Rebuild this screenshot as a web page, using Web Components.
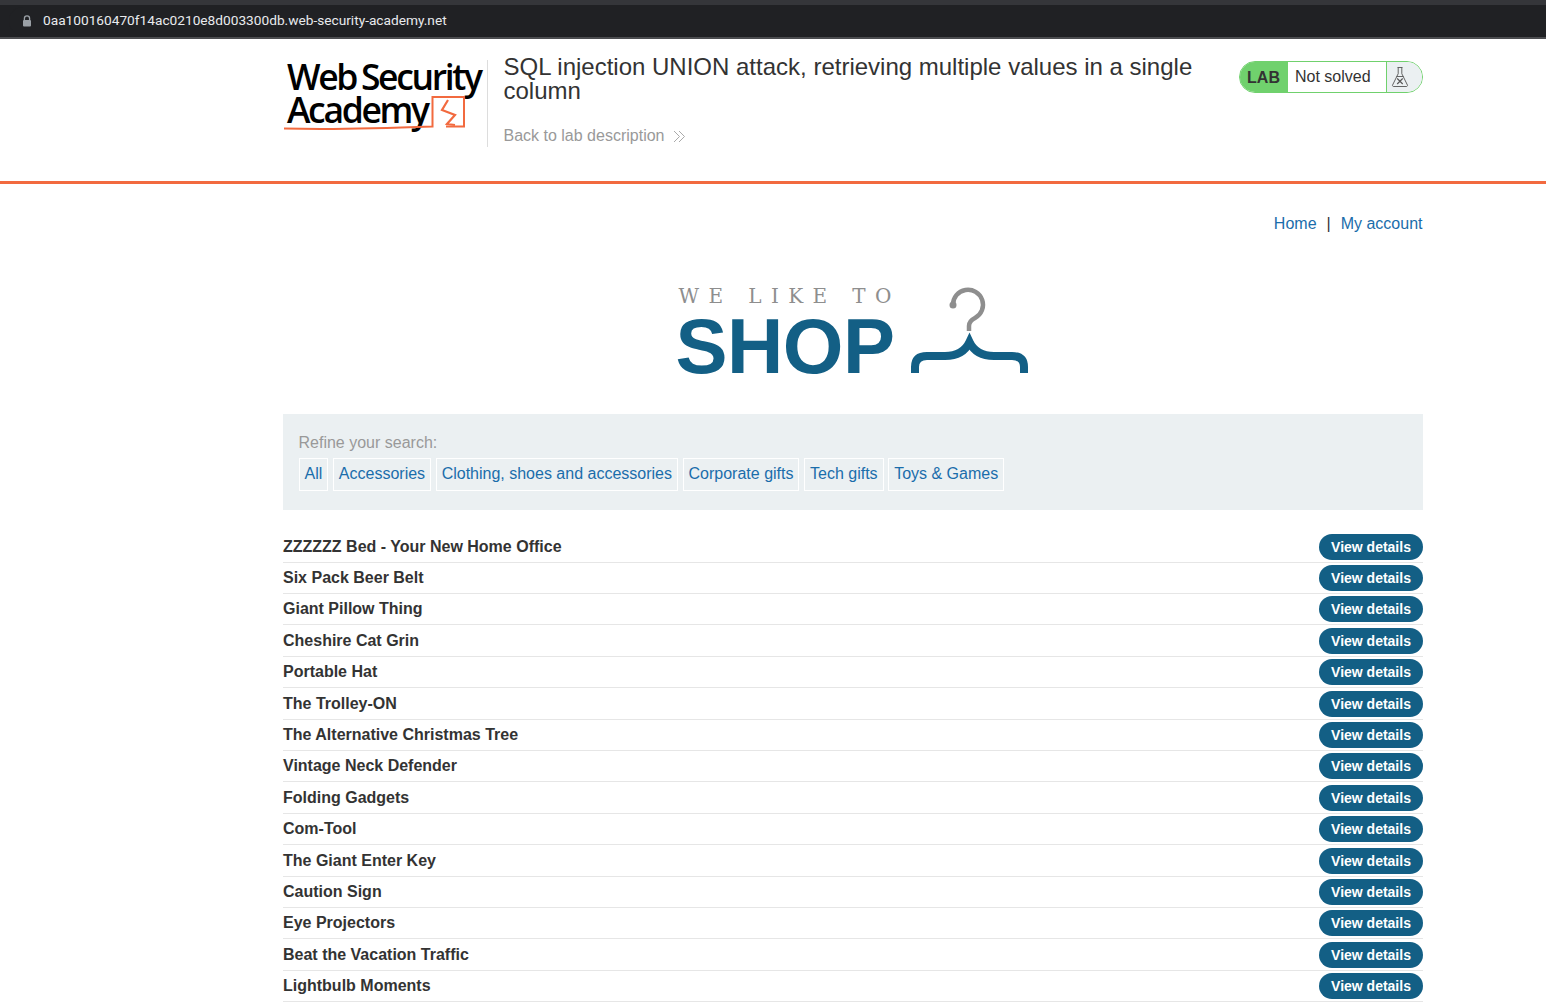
<!DOCTYPE html>
<html lang="en"><head><meta charset="utf-8"><title>Shop</title>
<style>
html,body{margin:0;padding:0;background:#fff;font-family:"Liberation Sans",Arial,sans-serif;color:#333}
body{height:1003px;overflow:hidden}
</style></head><body>
<browser-bar url="0aa100160470f14ac0210e8d003300db.web-security-academy.net"></browser-bar>
<lab-header></lab-header>
<shop-page>
  <top-nav></top-nav>
  <shop-logo></shop-logo>
  <filter-panel></filter-panel>
  <product-list></product-list>
</shop-page>
<script>
function def(name, html){
  customElements.define(name, class extends HTMLElement{
    connectedCallback(){
      if(this.shadowRoot) return;
      const r=this.attachShadow({mode:'open'});
      r.innerHTML=typeof html==='function'?html(this):html;
    }
  });
}
def('browser-bar',el=>`<style>
:host{display:block;height:39px;box-sizing:border-box;background:#35363a;padding-top:5px;border-bottom:2px solid #4c4d50}
.strip{height:32px;background:#202124;display:flex;align-items:center}
.pill{flex:1;height:28px;margin-left:9px;margin-top:-1px;background:#202124;border-radius:14px 0 0 14px;display:flex;align-items:center;padding-left:13px;gap:11px;color:#e8eaed;font:13.7px/1 "Roboto","Liberation Sans",sans-serif}
svg{display:block;flex:none}
</style><div class="strip"><div class="pill"><svg width="10" height="12" viewBox="0 0 10 12"><path d="M2.4 5V3.4a2.6 2.6 0 0 1 5.2 0V5" fill="none" stroke="#9aa0a6" stroke-width="1.3"/><rect x="1" y="5" width="8" height="6.5" rx="1" fill="#9aa0a6"/></svg><span>${el.getAttribute('url')}</span></div></div>`);

def('lab-status',`<style>
:host{display:flex;flex:none;width:184px;height:32px;box-sizing:border-box;border:1px solid #70d16d;border-radius:16px;overflow:hidden;font:16px/1 "Liberation Sans",sans-serif}
.lab{width:48px;background:#70d16d;color:#333;font-weight:700;display:flex;align-items:center;justify-content:center;padding:1px 1px 0 0;box-sizing:border-box}
.txt{flex:1;padding-left:7px;color:#333;display:flex;align-items:center}
.ico{width:36px;box-sizing:border-box;background:#ebf0f2;border-left:1px solid #70d16d;display:flex;align-items:center;padding-left:4px}
svg{display:block}
</style><div class="lab">LAB</div><div class="txt">Not solved</div><div class="ico"><svg width="18" height="22" viewBox="0 0 18 22" fill="none" stroke="#555" stroke-width=".9"><path d="M6.500 1.500h5M7.200 1.500v6.200L1.600 19a1 1 0 0 0 .9 1.500h13a1 1 0 0 0 .9-1.500L10.800 7.700V1.500"/><path d="M5.500 10.500h7"/><path d="M6.200 12.500l5.500 5.500M11.700 12.500l-5.500 5.500" stroke-width="1.100"/></svg></div>`);

def('lab-header',`<style>
:host{display:block;height:145px;box-sizing:border-box;border-bottom:3px solid #f26a3f;background:#fff}
.in{width:1140px;margin:0 0 0 283px;display:flex;align-items:flex-start;padding-top:21px}
.logo{width:205px;height:87px;box-sizing:border-box;border-right:1px solid #ddd;flex:none;position:relative;color:#000;font-family:"Open Sans","Liberation Sans",sans-serif;font-weight:600;letter-spacing:-2.350px;word-spacing:-2px;font-size:35.500px;line-height:33px}
.logo div{white-space:nowrap;margin-left:4px}
.logo svg{position:absolute;left:0;top:34px}
.main{flex:none;width:711px;padding-left:15.500px;box-sizing:border-box;margin-top:-5px}
h2{margin:0;font:400 24px/24px "Liberation Sans",sans-serif;color:#333;height:50px}
.back{display:flex;align-items:center;gap:9px;margin-top:19px;color:#999;font:16px/24px "Liberation Sans",sans-serif;height:24px}
.st{margin-left:auto;margin-top:1px}
</style><div class="in"><div class="logo"><div>Web Security</div><div>Academy</div>
<svg width="190" height="46" viewBox="0 0 190 46" fill="none" stroke="#f26a3f" stroke-width="2"><path d="M1 34.500C40 35.500 110 34 149.500 32.500V3H181V32.500H163"/><path d="M165 6l-6 10 13 5-8 9 8 1" stroke-width="2.200"/></svg></div>
<div class="main"><h2>SQL injection UNION attack, retrieving multiple values in a single column</h2>
<div class="back"><span>Back to lab description</span><svg width="13" height="13" viewBox="0 0 13 13" fill="none" stroke="#aaa" stroke-width="1"><path d="M1 1l5.500 5.500L1 12M6 1l5.500 5.500L6 12"/></svg></div></div>
<lab-status class="st"></lab-status></div>`);

def('shop-page',`<style>:host{display:block;width:1140px;margin-left:283px}</style><slot></slot>`);

def('top-nav',`<style>
:host{display:flex;justify-content:flex-end;align-items:center;gap:10px;height:24px;margin-top:28px;padding-right:.5px;font:16px/24px "Liberation Sans",sans-serif;color:#333}
a{color:#1a6dab;text-decoration:none}
</style><a href="#">Home</a><span>|</span><a href="#">My account</a>`);

def('shop-logo',`<style>
:host{display:flex;height:130px;margin-top:48px;margin-left:392.500px}
.t{width:229.500px;flex:none}
.we{font:400 20px/24px "DejaVu Serif","Liberation Mono",serif;color:#8e8e8e;letter-spacing:9.400px;white-space:pre;margin-left:3px;height:22px}
.shop{font:700 78px/80px "Liberation Sans",sans-serif;color:#135f85;letter-spacing:-.5px}
svg{display:block;flex:none;margin-top:1px}
</style><div class="t"><div class="we">WE LIKE TO</div><div class="shop">SHOP</div></div>
<svg width="130" height="92" viewBox="0 0 130 92" fill="none"><path d="M48 20A15 15 0 1 1 70 33Q64 36 64 41V46" stroke="#8e8e8e" stroke-width="4.500"/><circle cx="48" cy="20" r="3.500" fill="#8e8e8e"/><path d="M10 88V82Q10 71 22 71H40Q58 71 64.500 57Q71 71 89 71H107Q119 71 119 82V88" stroke="#135f85" stroke-width="8"/></svg>`);

const cats=['All','Accessories','Clothing, shoes and accessories','Corporate gifts','Tech gifts','Toys & Games'];
def('filter-panel',`<style>
:host{display:block;height:96px;box-sizing:border-box;background:#ebf0f2;padding:16px 16px 16px 15.500px;font:16px/24px "Liberation Sans",sans-serif}
p{margin:0;color:#999;height:28px;line-height:25px}
.c{display:flex;gap:4.550px}
a{display:block;height:33px;box-sizing:border-box;border:1px solid #fff;padding:3px 5px;color:#1a6dab;text-decoration:none}
</style><p>Refine your search:</p><div class="c">${cats.map(c=>`<a href="#">${c.replace('&','&amp;')}</a>`).join('')}</div>`);

const items=['ZZZZZZ Bed - Your New Home Office','Six Pack Beer Belt','Giant Pillow Thing','Cheshire Cat Grin','Portable Hat','The Trolley-ON','The Alternative Christmas Tree','Vintage Neck Defender','Folding Gadgets','Com-Tool','The Giant Enter Key','Caution Sign','Eye Projectors','Beat the Vacation Traffic','Lightbulb Moments'];
def('product-row',el=>`<style>
:host{display:flex;justify-content:space-between;align-items:flex-start;height:29px;margin-bottom:2.400px;box-sizing:border-box;border-bottom:1px solid #e6e6e6;font:700 16px/24px "Liberation Sans",sans-serif;color:#333}
span{padding-top:1px}
a{display:block;width:104px;height:26px;border-radius:13px;background:#135f85;color:#fff;font:700 14px/26px "Liberation Sans",sans-serif;text-align:center;text-decoration:none}
</style><span>${el.getAttribute('name')}</span><a href="#">View details</a>`);
def('product-list',`<style>:host{display:block;margin-top:23.700px}</style>${items.map(n=>`<product-row name="${n}"></product-row>`).join('')}`);
</script>
</body></html>
